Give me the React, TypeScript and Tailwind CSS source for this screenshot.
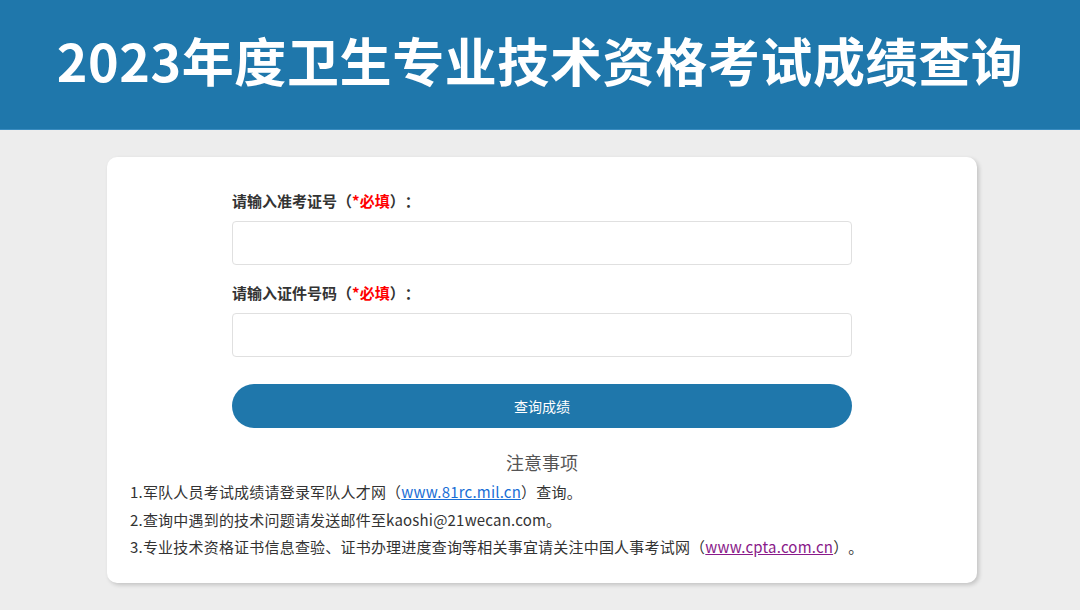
export default function App() {
  const font = { fontFamily: '"Microsoft YaHei", "Noto Sans CJK SC", sans-serif' }
  const label = (text: string) => (
    <label className="block text-[15px] font-bold text-[#333] leading-[20px] mb-[10px] [text-spacing-trim:space-all]">
      {text}<span className="text-[#333]">（</span><span className="text-[#f00]">*必填</span><span className="text-[#333]">）：</span>
    </label>
  )
  return (
    <div className="w-[1080px] h-[610px] bg-[#ededed] overflow-hidden" style={font}>
      <header className="h-[130px] bg-[#1f77ab] border-b border-[#3a8cc0] flex items-center justify-center">
        <h1 className="text-white text-[52px] font-bold leading-none tracking-[0.6px] -mt-[10px]">2023年度卫生专业技术资格考试成绩查询</h1>
      </header>

      <div className="w-[870px] ml-[107px] mt-[27px] bg-white rounded-[10px] shadow-[2px_2px_4px_rgba(0,0,0,0.18)] pt-[34px] pb-[22px]">
        <div className="w-[620px] mx-auto">
          {label('请输入准考证号')}
          <input className="block w-full h-[44px] border border-[#e0e0e0] rounded-[4px] outline-none px-3" />
          <div className="h-[18px]" />
          {label('请输入证件号码')}
          <input className="block w-full h-[44px] border border-[#e0e0e0] rounded-[4px] outline-none px-3" />
          <button className="mt-[27px] w-full h-[44px] rounded-full bg-[#1f77ab] text-white text-[14px]">查询成绩</button>
        </div>

        <h3 className="text-center text-[18px] text-[#555] mt-[22px] leading-[24px]">注意事项</h3>
        <div className="pl-[23px] text-[15px] text-[#333] leading-[27.5px] mt-[4px] tracking-[0.2px] [text-spacing-trim:space-all]">
          <p>1.军队人员考试成绩请登录军队人才网（<a className="text-[#1a6fd6] underline">www.81rc.mil.cn</a>）查询。</p>
          <p>2.查询中遇到的技术问题请发送邮件至kaoshi@21wecan.com。</p>
          <p>3.专业技术资格证书信息查验、证书办理进度查询等相关事宜请关注中国人事考试网（<a className="text-[#8a1a8a] underline">www.cpta.com.cn</a>）。</p>
        </div>
      </div>
    </div>
  )
}
